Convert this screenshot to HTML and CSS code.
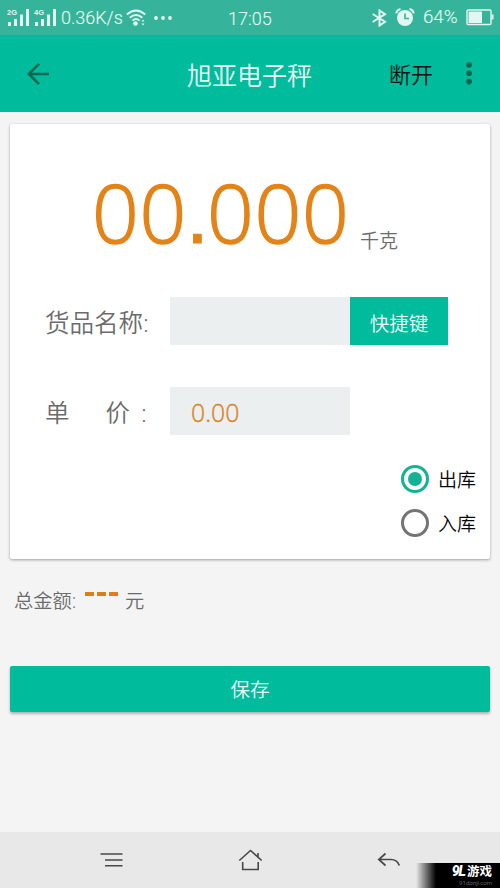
FILE: index.html
```html
<!DOCTYPE html>
<html lang="zh-CN">
<head>
<meta charset="utf-8">
<title>旭亚电子秤</title>
<link rel="stylesheet" href="styles.css">
</head>
<body>
<div class="status">
  <svg class="signals" width="52" height="20" viewBox="0 0 52 20" fill="#e4f6f1">
    <path d="M1 14h3v4H1zM7 11h3v7H7zM13 6.500h3V18h-3zM19 1h3v17h-3zM28 14h3v4h-3zM34 11h3v7h-3zM40 6.500h3V18h-3zM46 1h3v17h-3z"/>
    <text x="0" y="7" class="gen">2G</text><text x="27" y="7" class="gen">4G</text>
  </svg>
  <span class="speed">0.36K/s</span>
  <svg class="wifi" width="20" height="18" viewBox="0 0 20 18" fill="none" stroke="#e4f6f1" stroke-width="1.900">
    <path d="M.8 5.500Q10-2.500 19.200 5.500M3.700 8.700Q10 3.300 16.300 8.700M6.400 11.600Q10 8.400 13.600 11.600"/>
    <circle cx="9.500" cy="14.500" r="2.300" fill="#e4f6f1" stroke="none"/>
    <path d="M15.500 12.500l1.500-2 1.500 2zM15.500 14.500l1.500 2 1.500-2z" fill="#e4f6f1" stroke="none"/>
  </svg>
  <svg class="more" width="18" height="4" viewBox="0 0 18 4" fill="#e4f6f1"><circle cx="2" cy="2" r="1.900"/><circle cx="9" cy="2" r="1.900"/><circle cx="16" cy="2" r="1.900"/></svg>
  <span class="time">17:05</span>
  <svg class="bt" width="15" height="18" viewBox="0 0 15 18" fill="none" stroke="#e4f6f1" stroke-width="2"><path d="M.7 5l12.300 7.700L7.500 16.500V1.500L13 5.200.7 13"/></svg>
  <svg class="alarm" width="20" height="19" viewBox="0 0 20 19"><circle cx="10" cy="10" r="8" fill="#e4f6f1"/><path d="M1.200 5.300Q1.800 1.700 5.500 1M14.500 1Q18.200 1.700 18.800 5.300" fill="none" stroke="#e4f6f1" stroke-width="2"/><path d="M10 5.500v5h4" fill="none" stroke="#35b39b" stroke-width="1.600"/></svg>
  <span class="percent">64%</span>
  <svg class="battery" width="28" height="17" viewBox="0 0 28 17"><rect x="1" y="1" width="24" height="14.500" rx="1" fill="none" stroke="#e4f6f1" stroke-width="1.400"/><path d="M2.500 2.500H16V14H2.500zM25.500 5.500h2v5h-2z" fill="#e4f6f1"/></svg>
</div>
<header class="bar">
  <svg class="back" width="24" height="24" viewBox="0 0 24 24" fill="none" stroke="#116650" stroke-width="2.600"><path d="M12 1.800L1.800 12l10.200 10.200M2 12h20"/></svg>
  <h1>旭亚电子秤</h1>
  <span class="disconnect">断开</span>
  <svg class="menu" width="6" height="23" viewBox="0 0 6 23" fill="#11614c"><circle cx="3" cy="3" r="2.800"/><circle cx="3" cy="11.300" r="2.800"/><circle cx="3" cy="19.600" r="2.800"/></svg>
</header>
<main>
  <section class="card">
    <div class="weight"><span class="digits">00<span class="dot">.</span>000</span><span class="unit">千克</span></div>
    <div class="row">
      <span class="label">货品名称:</span><div class="input"></div><div class="quick">快捷键</div>
    </div>
    <div class="row price">
      <span class="label split"><span>单</span><span>价</span><span class="colon">:</span></span><div class="input">0.00</div>
    </div>
    <div class="radios">
      <div class="radio on"><i></i><span>出库</span></div>
      <div class="radio"><i></i><span>入库</span></div>
    </div>
  </section>
  <div class="total"><span>总金额:</span><span class="dashes"><i></i><i></i><i></i></span><span>元</span></div>
  <div class="save">保存</div>
</main>
<footer class="nav">
  <svg width="24" height="16" viewBox="0 0 24 16" fill="none" stroke="#484848" stroke-width="1.600"><path d="M.5 2h22M5 8h17.500M5 13.800h17.500"/></svg>
  <svg width="24" height="22" viewBox="0 0 24 22" fill="none" stroke="#484848" stroke-width="1.600"><path d="M1.300 11.500L12.500 1.500l11.200 10M20 8V4M4.700 13v7.500h15.500V13"/></svg>
  <svg width="24" height="16" viewBox="0 0 24 16" fill="none" stroke="#484848" stroke-width="1.700"><path d="M9.500 1.500L2.800 7.500l6.700 6M2.800 7.500H15Q21 7.500 23.300 13.500"/></svg>
  <div class="mark"><div class="brand"><b>9L</b><span>游戏</span></div><small>91danji.com</small></div>
</footer>
</body>
</html>
```
FILE: styles.css
```css
* { box-sizing: border-box; }
body {
  margin: 0;
  width: 500px;
  height: 888px;
  display: flex;
  flex-direction: column;
  overflow: hidden;
  background: #f4f4f4;
  color: #6b6b6b;
  font-family: "Open Sans", "Noto Sans CJK SC", sans-serif;
  font-weight: 350;
}
svg { display: block; flex: none; }
span { white-space: nowrap; }
.status {
  height: 35px;
  flex: none;
  display: flex;
  align-items: center;
  background: #35b39b;
  color: #e4f6f1;
  font-family: Roboto, sans-serif;
  font-size: 18px;
  line-height: 35px;
  -webkit-text-stroke: .15px #e4f6f1;
}
.signals { margin-left: 7px; -webkit-text-stroke: 0; }
.gen { font: bold 7.500px "Liberation Sans", sans-serif; }
.speed { width: 62px; margin-left: 2px; }
.wifi { margin-left: 3px; }
.more { margin-left: 8px; }
.time { width: 46px; margin: 2px 0 0 56px; }
.bt { margin-left: 98px; }
.alarm { margin-left: 8px; }
.percent { width: 36px; margin-left: 8px; font-size: 18.700px; }
.battery { margin-left: 7px; }
.bar {
  height: 77px;
  flex: none;
  display: flex;
  align-items: center;
  background: #00bb9c;
}
.back { margin: 0 0 0 27px; }
h1 {
  width: 130px;
  margin: 2px 0 0 136px;
  color: #effbf8;
  font-size: 25px;
  font-weight: 350;
  line-height: 36px;
}
.disconnect { width: 46px; margin: -1px 0 0 72px; font-size: 22px; color: #04150f; }
.menu { margin: 0 0 0 31px; }
main { flex: 1; padding: 12px 10px 0; }
.card {
  height: 435px;
  background: #fff;
  border-radius: 2px;
  box-shadow: 0 1px 3px rgba(0,0,0,.35);
}
.weight { height: 173px; padding: 37px 0 0 82px; display: flex; align-items: flex-start; }
.digits { width: 268px; font-size: 82px; font-weight: 300; line-height: 100px; color: #e38318; letter-spacing: .7px; -webkit-text-stroke: 1.400px #e38318; }
.dot { display: inline-block; width: 20px; text-indent: -1px; line-height: 1; font-family: "Liberation Sans", sans-serif; letter-spacing: 0; -webkit-text-stroke: .8px #e38318; }
.unit { margin-top: 65px; font-size: 19px; line-height: 30px; }
.row { height: 48px; display: flex; padding-left: 35px; }
.label { width: 125px; padding-top: 1px; font-size: 24.500px; line-height: 49px; }
.price { margin-top: 42px; }
.split { display: flex; }
.split span:nth-child(2) { margin-left: 36px; }
.colon { margin-left: 11px; }
.input { width: 180px; padding-left: 21px; background: #ebefef; color: #db8528; font-size: 24.800px; line-height: 50px; -webkit-text-stroke: .4px #db8528; }
.quick { width: 98px; padding-top: 2px; background: #00bb9c; color: #effbf8; text-align: center; font-size: 19.500px; line-height: 50px; }
.radios { padding: 22px 0 0 391px; }
.radio { height: 44px; display: flex; align-items: center; gap: 9px; color: #080808; font-size: 19px; }
.radio i { width: 28px; height: 28px; padding: 4px; border: 3px solid #747474; border-radius: 50%; }
.radio.on i { border-color: #13b296; background: #13b296 content-box; }
.total { height: 30px; margin-top: 27px; padding-left: 4px; display: flex; font-size: 19.300px; line-height: 30px; }
.total > span:first-child { width: 71px; }
.dashes { width: 40px; padding-top: 6px; display: flex; gap: 3px; }
.dashes i { width: 9px; height: 4px; background: #dd7e18; }
.save { height: 46px; margin-top: 50px; background: #00bb9c; border-radius: 2px; box-shadow: 0 2px 3px rgba(0,0,0,.28); color: #effbf8; text-align: center; font-size: 19.500px; line-height: 48px; }
.nav { position: relative; height: 56px; flex: none; display: flex; align-items: center; background: #e8e8e8; padding-left: 100px; gap: 114px; }
.mark {
  position: absolute;
  right: 0;
  bottom: 0;
  width: 84px;
  height: 25px;
  padding: 1px 8px 0 0;
  background: linear-gradient(90deg, rgba(0,0,0,0), #000 20px);
  color: #fff;
  text-align: right;
}
.brand { display: flex; justify-content: flex-end; align-items: center; gap: 2px; height: 15px; font-size: 12.500px; font-weight: 700; line-height: 15px; }
.brand b { font: italic 900 14px/15px Roboto, sans-serif; letter-spacing: -1px; }
.mark small { display: block; margin-top: 1px; font-size: 6px; line-height: 6px; color: #aaa; }
```
